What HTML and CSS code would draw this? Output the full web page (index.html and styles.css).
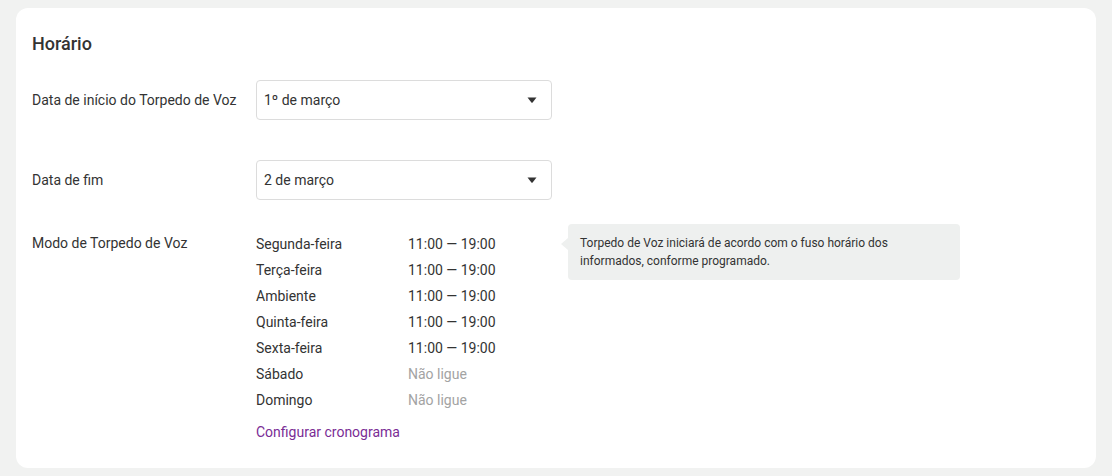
FILE: index.html
```html
<!DOCTYPE html>
<html lang="pt">

<head>
    <meta charset="UTF-8">
    <meta name="viewport" content="width=device-width, initial-scale=1.0">
    <title>Horário</title>
    <link rel="stylesheet" href="styles.css">
</head>

<body>
    <div class="card">
        <h2 class="title">Horário</h2>

        <div class="form-row">
            <div class="label">Data de início do Torpedo de Voz</div>
            <div class="select">
                <span>1º de março</span>
                <svg class="caret" width="10" height="6" viewBox="0 0 10 6"><path d="M0.5 0.5h9L5.6 5.4a0.8 0.8 0 0 1-1.2 0z" fill="#333"/></svg>
            </div>
        </div>

        <div class="form-row">
            <div class="label">Data de fim</div>
            <div class="select">
                <span>2 de março</span>
                <svg class="caret" width="10" height="6" viewBox="0 0 10 6"><path d="M0.5 0.5h9L5.6 5.4a0.8 0.8 0 0 1-1.2 0z" fill="#333"/></svg>
            </div>
        </div>

        <div class="form-row schedule-row">
            <div class="label schedule-label">Modo de Torpedo de Voz</div>
            <div class="schedule">
                <div class="day"><span class="day-name">Segunda-feira</span><span>11:00 — 19:00</span></div>
                <div class="day"><span class="day-name">Terça-feira</span><span>11:00 — 19:00</span></div>
                <div class="day"><span class="day-name">Ambiente</span><span>11:00 — 19:00</span></div>
                <div class="day"><span class="day-name">Quinta-feira</span><span>11:00 — 19:00</span></div>
                <div class="day"><span class="day-name">Sexta-feira</span><span>11:00 — 19:00</span></div>
                <div class="day"><span class="day-name">Sábado</span><span class="off">Não ligue</span></div>
                <div class="day"><span class="day-name">Domingo</span><span class="off">Não ligue</span></div>
                <a class="config-link" href="#">Configurar cronograma</a>
            </div>
            <div class="hint">
                Torpedo de Voz iniciará de acordo com o fuso horário dos informados, conforme programado.
            </div>
        </div>
    </div>
</body>

</html>
```

FILE: styles.css
```css
body {
    font-family: Roboto, 'Noto Sans', sans-serif;
    margin: 0;
    background-color: #f1f2f1;
    color: #333;
    font-size: 14px;
}

.card {
    background-color: #fff;
    margin: 8px 16px;
    border-radius: 12px;
    padding: 24px 16px 23px;
    height: 460px;
    box-sizing: border-box;
}

.title {
    margin: 0;
    font-size: 18px;
    font-weight: 500;
    line-height: 24px;
    color: #333;
}

.form-row {
    display: flex;
    align-items: center;
    margin-top: 40px;
}

.title + .form-row {
    margin-top: 24px;
}

.label {
    width: 224px;
    flex-shrink: 0;
    line-height: 20px;
}

.select {
    width: 296px;
    height: 40px;
    box-sizing: border-box;
    border: 1px solid #dcdcdc;
    border-radius: 4px;
    display: flex;
    align-items: center;
    justify-content: space-between;
    padding: 0 14px 0 7px;
}

.schedule-row {
    align-items: flex-start;
    margin-top: 24px;
}

.schedule-label {
    padding-top: 9px;
}

.schedule {
    width: 312px;
    flex-shrink: 0;
    padding-top: 7px;
}

.day {
    display: flex;
    line-height: 26px;
}

.day-name {
    width: 152px;
}

.off {
    color: #a3a3a3;
}

.config-link {
    display: block;
    margin-top: 6px;
    line-height: 26px;
    color: #7a2c95;
    text-decoration: none;
}

.hint {
    position: relative;
    width: 392px;
    box-sizing: border-box;
    background-color: #eef0ef;
    border-radius: 4px;
    padding: 10px 12px;
    font-size: 12px;
    line-height: 18px;
    color: #333;
}

.hint::before {
    content: "";
    position: absolute;
    left: -7px;
    top: 14px;
    border-top: 6px solid transparent;
    border-bottom: 6px solid transparent;
    border-right: 7px solid #eef0ef;
}
```
